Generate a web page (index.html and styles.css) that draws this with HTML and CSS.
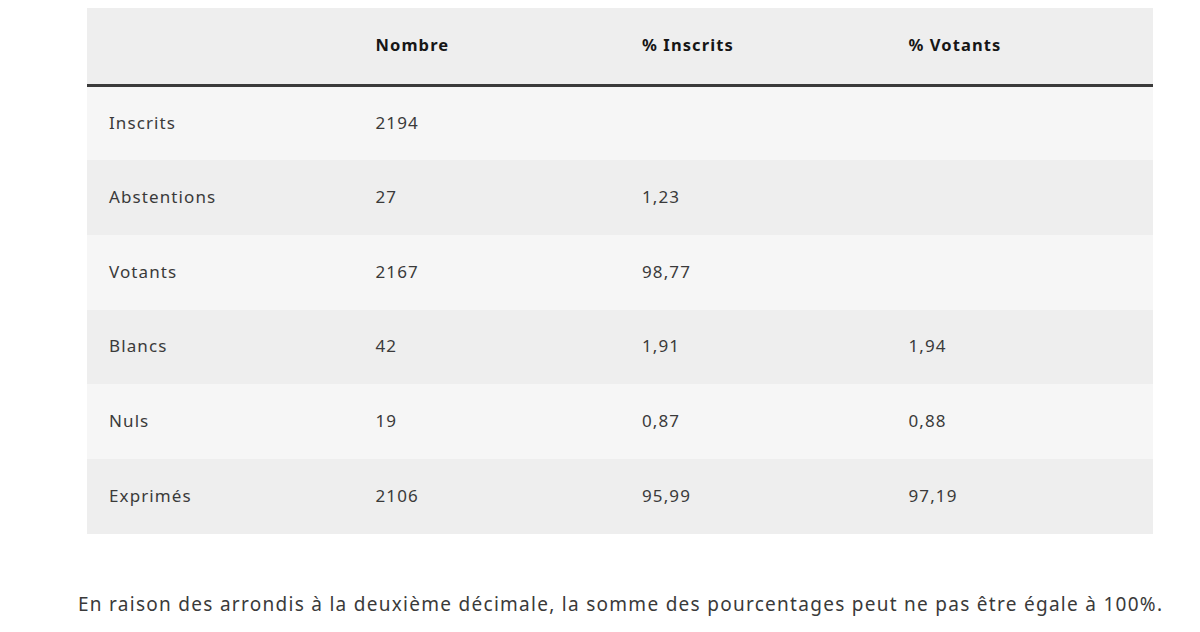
FILE: index.html
```html
<!DOCTYPE html>
<html lang="fr">
<head>
<meta charset="utf-8">
<link rel="stylesheet" href="styles.css">
</head>
<body>
<div class="page">
  <div class="table-wrap">
    <table class="results">
      <thead>
        <tr><th></th><th>Nombre</th><th>% Inscrits</th><th>% Votants</th></tr>
      </thead>
      <tbody>
        <tr><td>Inscrits</td><td>2194</td><td></td><td></td></tr>
        <tr><td>Abstentions</td><td>27</td><td>1,23</td><td></td></tr>
        <tr><td>Votants</td><td>2167</td><td>98,77</td><td></td></tr>
        <tr><td>Blancs</td><td>42</td><td>1,91</td><td>1,94</td></tr>
        <tr><td>Nuls</td><td>19</td><td>0,87</td><td>0,88</td></tr>
        <tr><td>Exprimés</td><td>2106</td><td>95,99</td><td>97,19</td></tr>
      </tbody>
    </table>
  </div>
  <p class="note">En raison des arrondis à la deuxième décimale, la somme des pourcentages peut ne pas être égale à 100%.</p>
</div>
</body>
</html>
```
FILE: styles.css
```css
html, body {
  margin: 0;
  padding: 0;
  background: #fff;
}
body {
  font-family: "Noto Sans", "DejaVu Sans", sans-serif;
  color: #3a3a3a;
}
.page {
  padding: 8px 0 0 78px;
}
.table-wrap {
  padding-left: 9px;
}
.results {
  width: 1066px;
  border-collapse: collapse;
  table-layout: fixed;
  font-size: 17px;
  letter-spacing: 1.1px;
}
.results th {
  background: #eeeeee;
  color: #161616;
  font-weight: 700;
  font-size: 16.5px;
  letter-spacing: 1.1px;
  text-align: left;
  height: 77px;
  padding: 0 0 2px 22px;
  border-bottom: 3px solid #3a3a3a;
  box-sizing: border-box;
}
.results td {
  padding: 0 0 2px 22px;
  text-align: left;
  box-sizing: border-box;
}
.results tbody tr:nth-child(odd) td {
  height: 75px;
  background: #f6f6f6;
}
.results tbody tr:nth-child(even) td {
  height: 74.5px;
  background: #eeeeee;
}
.note {
  margin: 56px 0 0 0;
  font-size: 19px;
  line-height: 28px;
  letter-spacing: 1.28px;
  white-space: nowrap;
  color: #3a3a3a;
}
```
